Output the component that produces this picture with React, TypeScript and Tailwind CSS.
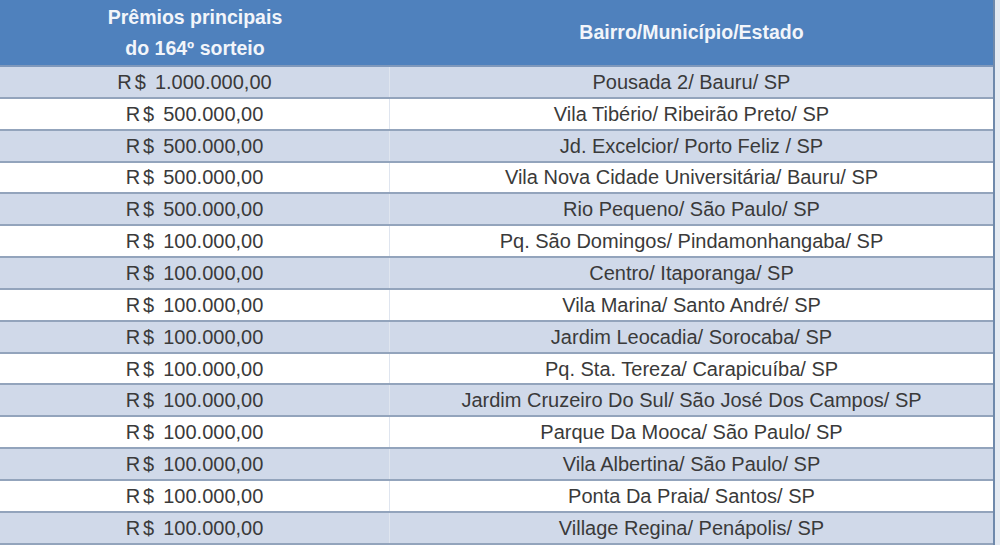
const rows: [string, string][] = [
  ["1.000.000,00", "Pousada 2/ Bauru/ SP"],
  ["500.000,00", "Vila Tibério/ Ribeirão Preto/ SP"],
  ["500.000,00", "Jd. Excelcior/ Porto Feliz / SP"],
  ["500.000,00", "Vila Nova Cidade Universitária/ Bauru/ SP"],
  ["500.000,00", "Rio Pequeno/ São Paulo/ SP"],
  ["100.000,00", "Pq. São Domingos/ Pindamonhangaba/ SP"],
  ["100.000,00", "Centro/ Itaporanga/ SP"],
  ["100.000,00", "Vila Marina/ Santo André/ SP"],
  ["100.000,00", "Jardim Leocadia/ Sorocaba/ SP"],
  ["100.000,00", "Pq. Sta. Tereza/ Carapicuíba/ SP"],
  ["100.000,00", "Jardim Cruzeiro Do Sul/ São José Dos Campos/ SP"],
  ["100.000,00", "Parque Da Mooca/ São Paulo/ SP"],
  ["100.000,00", "Vila Albertina/ São Paulo/ SP"],
  ["100.000,00", "Ponta Da Praia/ Santos/ SP"],
  ["100.000,00", "Village Regina/ Penápolis/ SP"],
]

export default function App() {
  return (
    <div className="w-[1000px] h-[545px] overflow-hidden bg-[#e4eaf2] font-['Liberation_Sans',Arial,sans-serif]">
      <div className="w-[995px] border-r-2 border-[#6f89ab] bg-white">
        {/* header */}
        <div className="flex h-[67px] bg-[#4f81bd] text-[#f2f5fa] font-bold text-[19.5px] border-b-2 border-[#7f98bb]">
          <div className="w-[390px] flex flex-col items-center justify-center leading-[31px]">
            <span>Prêmios principais</span>
            <span>do 164º sorteio</span>
          </div>
          <div className="flex-1 flex items-center justify-center">Bairro/Município/Estado</div>
        </div>

        {rows.map(([value, place], i) => (
          <div
            key={i}
            className={
              "flex h-[31.85px] text-[20px] text-[#3a3a3a] border-b-2 border-[#93a4bc] " +
              (i % 2 === 0 ? "bg-[#d0d9e9]" : "bg-white")
            }
          >
            <div className="w-[390px] flex items-center justify-center border-r border-[#dfe5ef]">
              <span>
                R<span className="ml-[3px]">$</span>
                <span className="ml-[9px]">{value}</span>
              </span>
            </div>
            <div className="flex-1 flex items-center justify-center">{place}</div>
          </div>
        ))}
      </div>
    </div>
  )
}
